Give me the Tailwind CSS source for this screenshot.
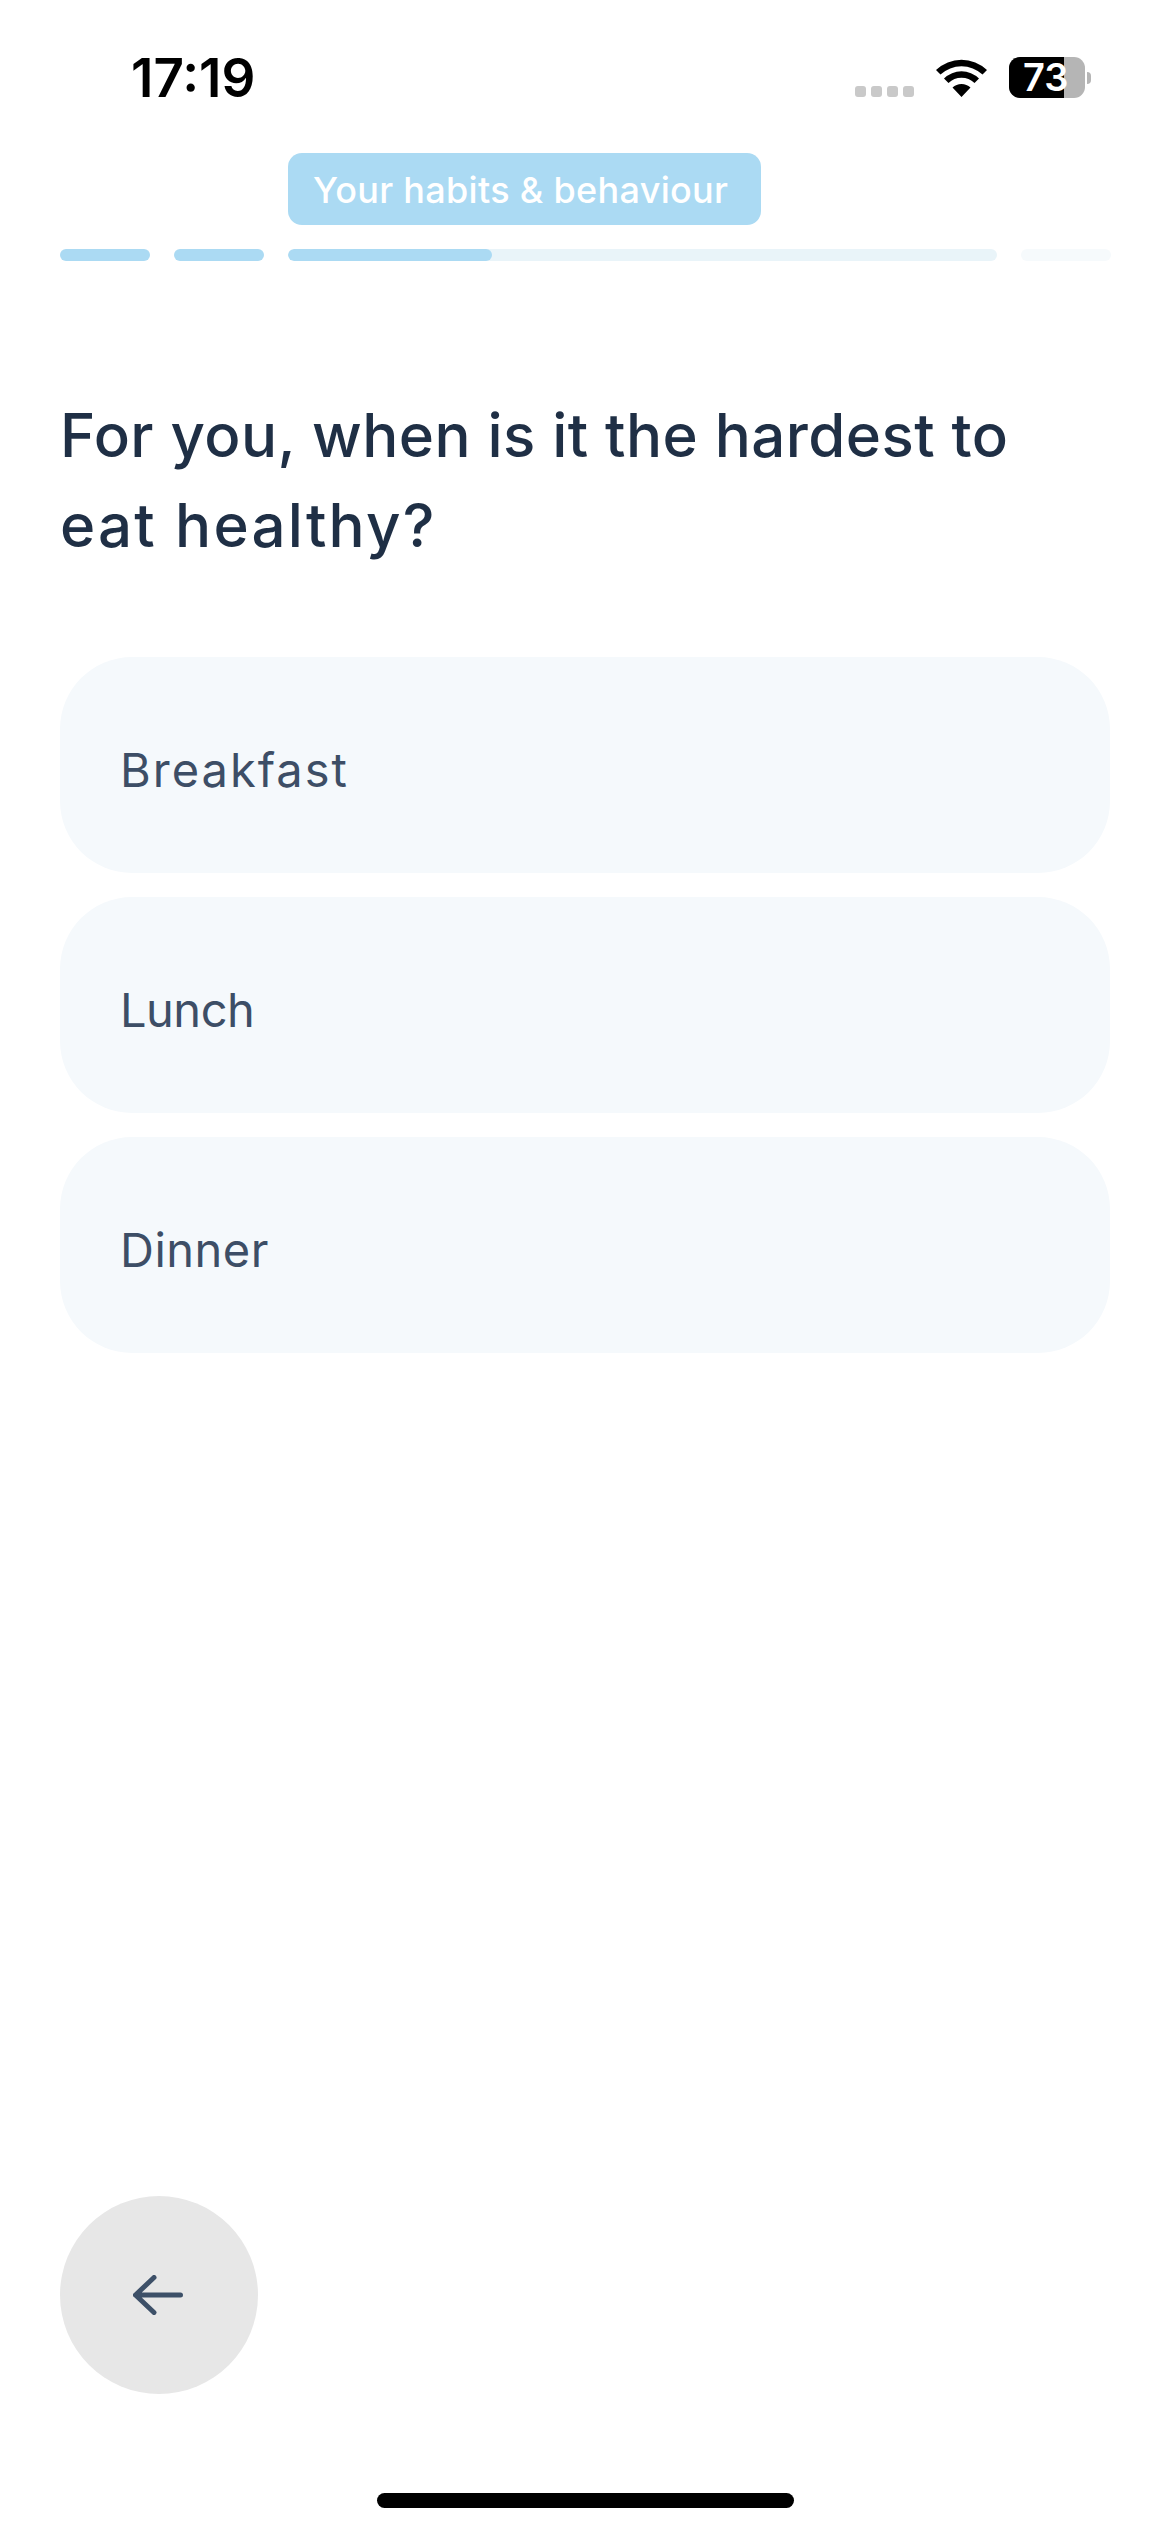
<!DOCTYPE html>
<html lang="en">
<head>
  <meta charset="UTF-8">
  <title>Question</title>
  <script src="https://cdn.jsdelivr.net/npm/@tailwindcss/browser@4"></script>
</head>
<body class="bg-white">
  <div class="w-[1170px] h-[2532px] flex flex-col relative overflow-hidden font-['Inter',sans-serif]">
    <!-- status bar -->
    <div class="h-[153px] flex justify-between pl-[131px] pr-[79px] shrink-0">
      <span class="mt-[48px] h-[60px] text-[53px] leading-[60px] font-semibold text-black">17:19</span>
      <div class="flex items-start pt-[57px]">
        <div class="flex gap-[5px] mt-[29px] mr-[22px]">
          <span class="w-[11px] h-[11px] rounded-[3px] bg-[#c9c9c9]"></span>
          <span class="w-[11px] h-[11px] rounded-[3px] bg-[#c9c9c9]"></span>
          <span class="w-[11px] h-[11px] rounded-[3px] bg-[#c9c9c9]"></span>
          <span class="w-[11px] h-[11px] rounded-[3px] bg-[#c9c9c9]"></span>
        </div>
        <svg class="mt-[2px] mr-[22px]" width="51" height="38" viewBox="0 0 51 38"><path d="M25.5 38 L16.5 28.5 A13 13 0 0 1 34.5 28.5 Z M12.5 24 L8 19.5 A25 25 0 0 1 43 19.5 L38.5 24 A19 19 0 0 0 12.5 24 Z M4.5 15.5 L0 11 A37 37 0 0 1 51 11 L46.5 15.5 A31 31 0 0 0 4.5 15.5 Z" fill="#000"/></svg>
        <div class="relative w-[76px] h-[41px] rounded-[11px] bg-[#b5b5b5]">
          <div class="absolute left-0 top-0 h-full w-[55px] rounded-l-[11px] bg-black"></div>
          <span class="absolute left-[14px] top-0 text-[38px] leading-[41px] font-semibold text-white">73</span>
        </div>
        <div class="w-[4px] h-[12px] mt-[15px] ml-[2px] rounded-r-full bg-[#b5b5b5]"></div>
      </div>
    </div>
    <!-- progress -->
    <div class="relative h-[108px] shrink-0">
      <div class="absolute left-[288px] top-0 w-[473px] pl-[25px] pt-[2px] h-[72px] rounded-[14px] bg-[#abdaf3] flex items-center text-[36px] tracking-[0.3px] font-medium text-white whitespace-nowrap">Your habits &amp; behaviour</div>
      <div class="absolute left-[60px] right-[59px] top-[96px] flex gap-[24px]">
        <div class="w-[90px] h-[12px] rounded-full bg-[#abdaf3]"></div>
        <div class="w-[90px] h-[12px] rounded-full bg-[#abdaf3]"></div>
        <div class="w-[709px] h-[12px] rounded-full bg-[#e9f4f9] overflow-hidden"><div class="w-[204px] h-full rounded-full bg-[#abdaf3]"></div></div>
        <div class="w-[90px] h-[12px] rounded-full bg-[#f6fafc]"></div>
      </div>
    </div>
    <!-- question -->
    <h1 class="px-[60px] mt-[129px] text-[60px] leading-[90px] tracking-[0.45px] font-medium text-[#1f2f45]">For you, when is it the hardest to<br><span class="tracking-[2.2px]">eat healthy?</span></h1>
    <div class="px-[60px] mt-[87px] flex flex-col gap-[24px]">
      <div class="h-[216px] rounded-[72px] bg-[#f5f9fc] flex items-center pl-[60px] pt-[10px] text-[47px] tracking-[2px] text-[#3d4e66]">Breakfast</div>
      <div class="h-[216px] rounded-[72px] bg-[#f5f9fc] flex items-center pl-[60px] pt-[10px] text-[47px] tracking-[-0.5px] text-[#3d4e66]">Lunch</div>
      <div class="h-[216px] rounded-[72px] bg-[#f5f9fc] flex items-center pl-[60px] pt-[10px] text-[47px] tracking-[0.5px] text-[#3d4e66]">Dinner</div>
    </div>
    <!-- back -->
    <div class="mt-auto mb-[138px] ml-[60px] w-[198px] h-[198px] rounded-full bg-[#e7e7e7] flex items-center justify-center">
      <svg class="mr-[2px]" width="50" height="40" viewBox="0 0 50 40" fill="none" stroke="#3d5068" stroke-width="5" stroke-linecap="round" stroke-linejoin="round"><path d="M2.5 20 H47.5 M21 2.5 L2.5 20 L21 37.5"/></svg>
    </div>
    <!-- home indicator -->
    <div class="absolute left-[377px] bottom-[24px] w-[417px] h-[15px] rounded-full bg-black"></div>
  </div>
</body>
</html>
